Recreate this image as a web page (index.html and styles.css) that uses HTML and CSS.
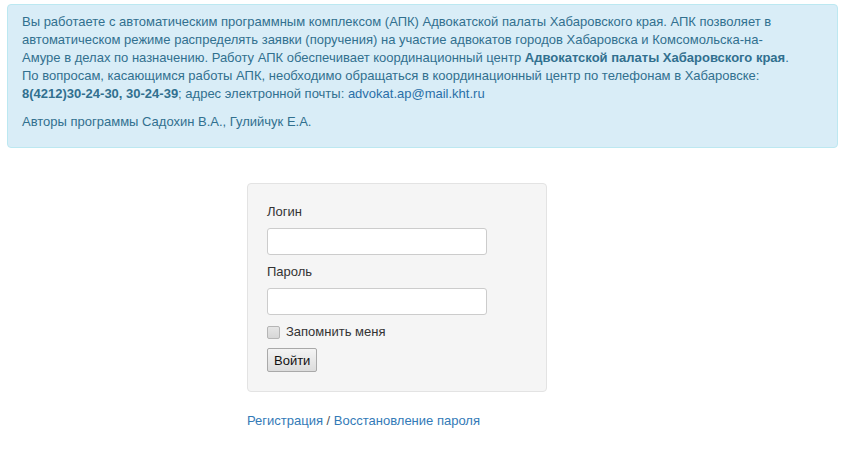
FILE: index.html
```html
<!DOCTYPE html>
<html lang="ru">
<head>
<meta charset="utf-8">
<title>АПК</title>
<link rel="stylesheet" href="styles.css">
</head>
<body>
<div class="page">
  <div class="alert">
    <p>Вы работаете с автоматическим программным комплексом (АПК) Адвокатской палаты Хабаровского края. АПК позволяет в автоматическом режиме распределять заявки (поручения) на участие адвокатов городов Хабаровска и Комсомольска-на-Амуре в делах по назначению. Работу АПК обеспечивает координационный центр <b>Адвокатской палаты Хабаровского края</b>.<br>По вопросам, касающимся работы АПК, необходимо обращаться в координационный центр по телефонам в Хабаровске: <b>8(4212)30-24-30, 30-24-39</b>; адрес электронной почты: <a href="#">advokat.ap@mail.kht.ru</a></p>
    <p>Авторы программы Садохин В.А., Гулийчук Е.А.</p>
  </div>
  <div class="login">
    <form class="well">
      <label class="lbl" for="login">Логин</label>
      <input class="field" id="login" type="text">
      <label class="lbl" for="pass">Пароль</label>
      <input class="field" id="pass" type="password">
      <label class="remember"><span class="box"></span>Запомнить меня</label>
      <button class="btn" type="button">Войти</button>
    </form>
    <div class="links"><a href="#">Регистрация</a> / <a href="#">Восстановление пароля</a></div>
  </div>
</div>
</body>
</html>
```
FILE: styles.css
```css
html, body { margin: 0; padding: 0; background: #fff; }
body {
  font-family: "Liberation Sans", Arial, sans-serif;
  font-size: 13px;
  line-height: 18px;
  color: #333;
}
.page { padding: 4px 10px 0 7px; }
.alert {
  background: #d9edf7;
  border: 1px solid #bce8f1;
  border-radius: 4px;
  color: #31708f;
  padding: 8px 42px 6px 14px;
}
.alert p { margin: 0 0 10px 0; }
.alert b { font-weight: bold; }
.alert a { color: #2a6fa8; text-decoration: none; }
.login { padding-left: 240px; padding-top: 35px; }
.well {
  width: 260px;
  background: #f5f5f5;
  border: 1px solid #e3e3e3;
  border-radius: 4px;
  padding: 19px 19px 19px 19px;
  display: flex;
  flex-direction: column;
  align-items: flex-start;
}
.lbl { display: block; color: #333; margin-bottom: 7px; }
.field {
  box-sizing: border-box;
  width: 220px;
  height: 27px;
  border: 1px solid #ccc;
  border-radius: 3px;
  background: #fff;
  margin: 0 0 8px 0;
  padding: 2px 6px;
  font: inherit;
}
.remember { display: flex; align-items: center; color: #333; margin: 0 0 7px 0; height: 18px; }
.box {
  width: 11px; height: 11px;
  border: 1px solid #b5b5b5;
  border-radius: 2px;
  background: linear-gradient(#e6e6e6, #d6d6d6);
  margin-right: 6px;
}
.btn {
  font-family: inherit;
  font-size: 13px;
  font-weight: normal;
  color: #111;
  height: 24px;
  padding: 0 6px;
  border: 1px solid #a9a9a9;
  border-radius: 2px;
  background: linear-gradient(#f4f4f4, #dcdcdc);
}
.links { margin-top: 20px; color: #555; }
.links a { color: #337ab7; text-decoration: none; }
```
